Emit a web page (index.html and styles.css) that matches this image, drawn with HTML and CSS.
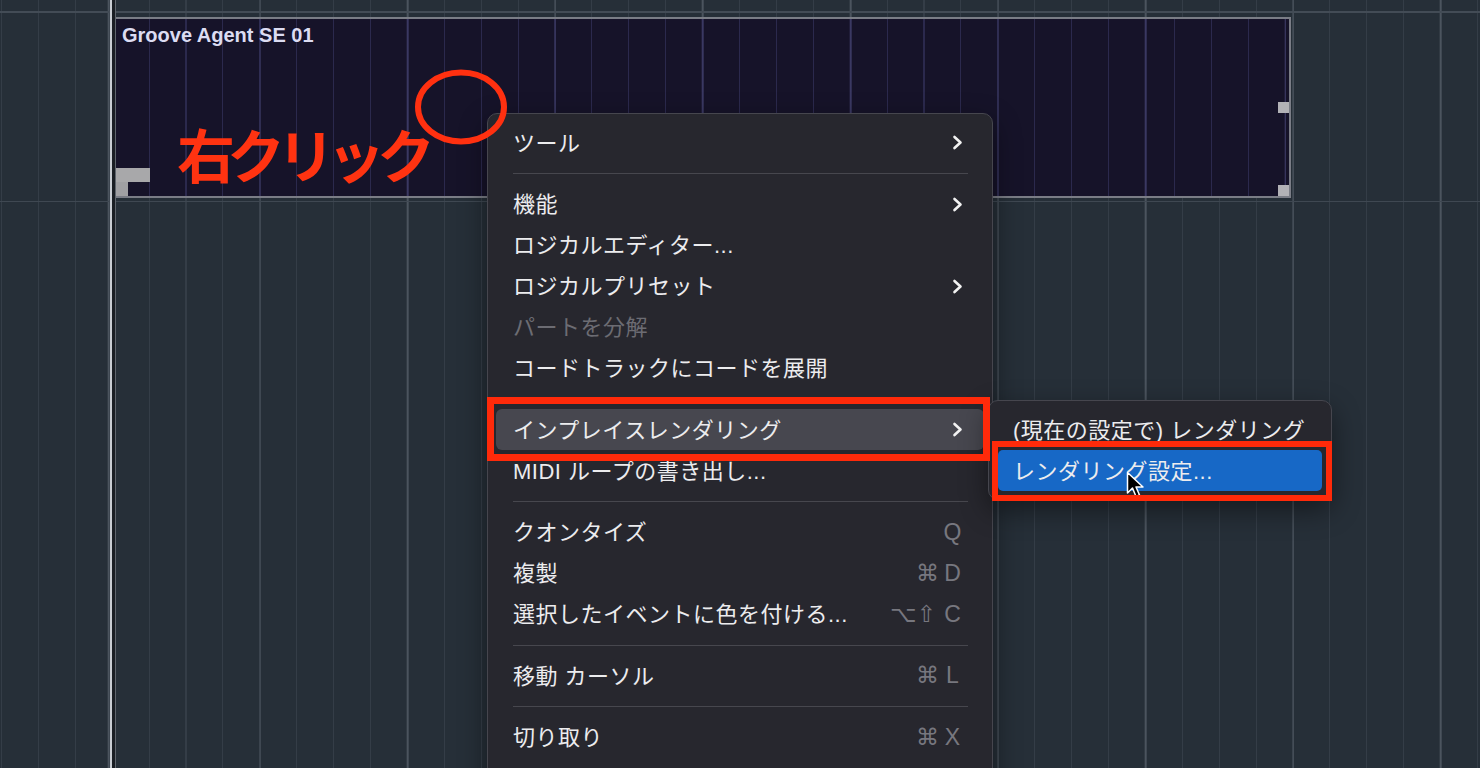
FILE: index.html
```html
<!DOCTYPE html>
<html lang="ja">
<head>
    <meta charset="utf-8" />
    <title>プロジェクト - Groove Agent SE 01</title>
    <link rel="stylesheet" href="styles.css">
</head>
<body>
    <div class="arrange">
        <div class="ruler"></div>
        <div class="lane">
            <div class="event">
                <div class="event-name">Groove Agent SE 01</div>
                <span class="grip grip-mid"></span>
                <span class="grip grip-end"></span>
                <span class="grip-start"></span>
                <span class="grip-start-sq"></span>
            </div>
        </div>
        <div class="locator"></div>

        <!-- コンテキストメニュー -->
        <div class="menu main-menu">
            <div class="item">
                <span>ツール</span>
                <svg class="chev" viewBox="0 0 11 15"><path d="M2.5 2 L8.5 7.5 L2.5 13" /></svg>
            </div>
            <div class="sep"></div>
            <div class="item">
                <span>機能</span>
                <svg class="chev" viewBox="0 0 11 15"><path d="M2.5 2 L8.5 7.5 L2.5 13" /></svg>
            </div>
            <div class="item"><span>ロジカルエディター...</span></div>
            <div class="item">
                <span>ロジカルプリセット</span>
                <svg class="chev" viewBox="0 0 11 15"><path d="M2.5 2 L8.5 7.5 L2.5 13" /></svg>
            </div>
            <div class="item disabled"><span>パートを分解</span></div>
            <div class="item"><span>コードトラックにコードを展開</span></div>
            <div class="sep"></div>
            <div class="item active">
                <span>インプレイスレンダリング</span>
                <svg class="chev" viewBox="0 0 11 15"><path d="M2.5 2 L8.5 7.5 L2.5 13" /></svg>
            </div>
            <div class="item"><span>MIDI ループの書き出し...</span></div>
            <div class="sep"></div>
            <div class="item">
                <span>クオンタイズ</span>
                <span class="keys"><span class="k">Q</span></span>
            </div>
            <div class="item">
                <span>複製</span>
                <span class="keys"><span class="k mod">⌘</span><span class="k">D</span></span>
            </div>
            <div class="item">
                <span>選択したイベントに色を付ける...</span>
                <span class="keys"><span class="k mod">⌥</span><span class="k mod">⇧</span><span class="k">C</span></span>
            </div>
            <div class="sep"></div>
            <div class="item">
                <span>移動 カーソル</span>
                <span class="keys"><span class="k mod">⌘</span><span class="k">L</span></span>
            </div>
            <div class="sep"></div>
            <div class="item">
                <span>切り取り</span>
                <span class="keys"><span class="k mod">⌘</span><span class="k">X</span></span>
            </div>
        </div>

        <div class="menu submenu">
            <div class="item"><span>(現在の設定で) レンダリング</span></div>
            <div class="item selected"><span>レンダリング設定...</span></div>
        </div>

        <svg class="pointer" viewBox="0 0 20 30">
            <path d="M1.5 1.5 V22 L6.5 17 L10 25.5 L13.5 24 L10 16 H17 Z" />
        </svg>

        <!-- 注釈 -->
        <svg class="note-circle" viewBox="0 0 115 95">
            <ellipse cx="56" cy="47" rx="43" ry="34.5" />
        </svg>
        <div class="note-text">右クリック</div>
        <div class="mark mark-main"></div>
        <div class="mark mark-sub"></div>
    </div>
</body>
</html>
```

FILE: styles.css
```css
body {
    margin: 0;
    overflow: hidden;
    background: #262f38;
}

/* アレンジウィンドウ */
.arrange {
    position: relative;
    width: 1480px;
    height: 768px;
    overflow: hidden;
    background-color: #262f38;
    background-image:
        repeating-linear-gradient(to right, #4b545e 0 1.5px, transparent 1.5px 147.6px),
        repeating-linear-gradient(to right, #343d47 0 1px, transparent 1px 36.9px);
    background-position: 111.7px 0, 1px 0;
}

.ruler {
    height: 11px;
    border-bottom: 2px solid #434c56;
}

.lane {
    height: 184px;
    padding-top: 4px;
    border-bottom: 1px solid #3f4852;
}

.event {
    position: relative;
    box-sizing: border-box;
    margin-left: 114px;
    width: 1177px;
    height: 181px;
    border: 2px solid #7a7d86;
    background-color: #161329;
    background-image:
        repeating-linear-gradient(to right, #3a3862 0 1.5px, transparent 1.5px 147.6px),
        repeating-linear-gradient(to right, #2b294d 0 1px, transparent 1px 36.9px);
    background-position: -4.3px 0, -115px 0;
}

.event-name {
    padding: 6px 0 0 6px;
    font-family: "Liberation Sans", Arial, sans-serif;
    font-weight: bold;
    font-size: 20px;
    line-height: 20px;
    color: #dcdcf2;
}

.grip {
    position: absolute;
    right: 0;
    width: 11px;
    height: 11px;
    background: #b2b2b6;
}

.grip-mid { top: 83px; }
.grip-end { bottom: 0; }

.grip-start {
    position: absolute;
    left: 0;
    bottom: 14px;
    width: 34px;
    height: 14px;
    background: #a8a8aa;
}

.grip-start-sq {
    position: absolute;
    left: 0;
    bottom: 0;
    width: 12px;
    height: 14px;
    background: #a0a0a3;
}

/* 再生位置ライン */
.locator {
    position: absolute;
    left: 110px;
    top: 0;
    bottom: 0;
    width: 3px;
    border-left: 2px solid #c9cdd3;
    border-right: 1px solid #5f656d;
    background: #1a1e24;
}

/* メニュー */
.menu {
    position: absolute;
    z-index: 2;
    box-sizing: border-box;
    background: #27272e;
    border: 1px solid #46464e;
    border-radius: 10px;
    box-shadow: 0 10px 28px rgba(0, 0, 0, 0.45);
    font-family: "Liberation Sans", "Noto Sans CJK JP", sans-serif;
    font-size: 22px;
    letter-spacing: 0.5px;
    color: #ececee;
}

.main-menu {
    left: 487px;
    top: 113px;
    width: 506px;
    padding: 8px 0 40px;
}

.item {
    display: flex;
    align-items: center;
    justify-content: space-between;
    box-sizing: border-box;
    height: 41px;
    margin: 0 8px;
    padding: 0 21px 4px 17px;
    border-radius: 6px;
    white-space: nowrap;
}

.item.disabled {
    color: #6c6c73;
}

.item.active {
    background: #47474f;
}

.sep {
    height: 1px;
    margin: 10px 24px 9.5px 25px;
    background: #47474e;
}

.chev {
    width: 11px;
    height: 15px;
    margin-top: 4px;
    fill: none;
    stroke: #f2f2f2;
    stroke-width: 2.6;
    stroke-linecap: round;
    stroke-linejoin: round;
}

.keys {
    display: flex;
    align-items: baseline;
    gap: 5px;
    margin-top: 4px;
    color: #77777f;
    letter-spacing: 0;
}

.k {
    width: 21px;
    text-align: center;
    font-family: "Liberation Sans", Arial, sans-serif;
    font-size: 23px;
}

.k.mod {
    font-family: "DejaVu Sans", sans-serif;
    font-size: 23px;
}

.submenu {
    left: 988px;
    top: 400px;
    width: 344px;
    padding: 8px 0;
}

.submenu .item {
    margin: 0 9px;
    padding: 0 12px 4px 15px;
}

.submenu .item.selected {
    background: #1768c6;
    border-radius: 5px;
}

/* マウスポインタ */
.pointer {
    position: absolute;
    z-index: 3;
    left: 1126px;
    top: 471px;
    width: 20px;
    height: 30px;
    fill: #000;
    stroke: #fff;
    stroke-width: 1.5;
    stroke-linejoin: round;
}

/* 赤い注釈 */
.note-circle {
    position: absolute;
    z-index: 4;
    left: 405px;
    top: 60px;
    width: 115px;
    height: 95px;
    fill: none;
    stroke: #ff3010;
    stroke-width: 6;
}

.note-text {
    position: absolute;
    z-index: 4;
    left: 177px;
    top: 124px;
    font-family: "Noto Sans CJK JP", sans-serif;
    font-weight: bold;
    font-size: 58px;
    line-height: 58px;
    letter-spacing: -8px;
    color: #ff3311;
}

.mark {
    position: absolute;
    z-index: 4;
    box-sizing: border-box;
    border: 7px solid #ff2a0a;
}

.mark-main {
    left: 487px;
    top: 397px;
    width: 503px;
    height: 64px;
}

.mark-sub {
    left: 992px;
    top: 441px;
    width: 340px;
    height: 60px;
    border-width: 6px;
}
```
